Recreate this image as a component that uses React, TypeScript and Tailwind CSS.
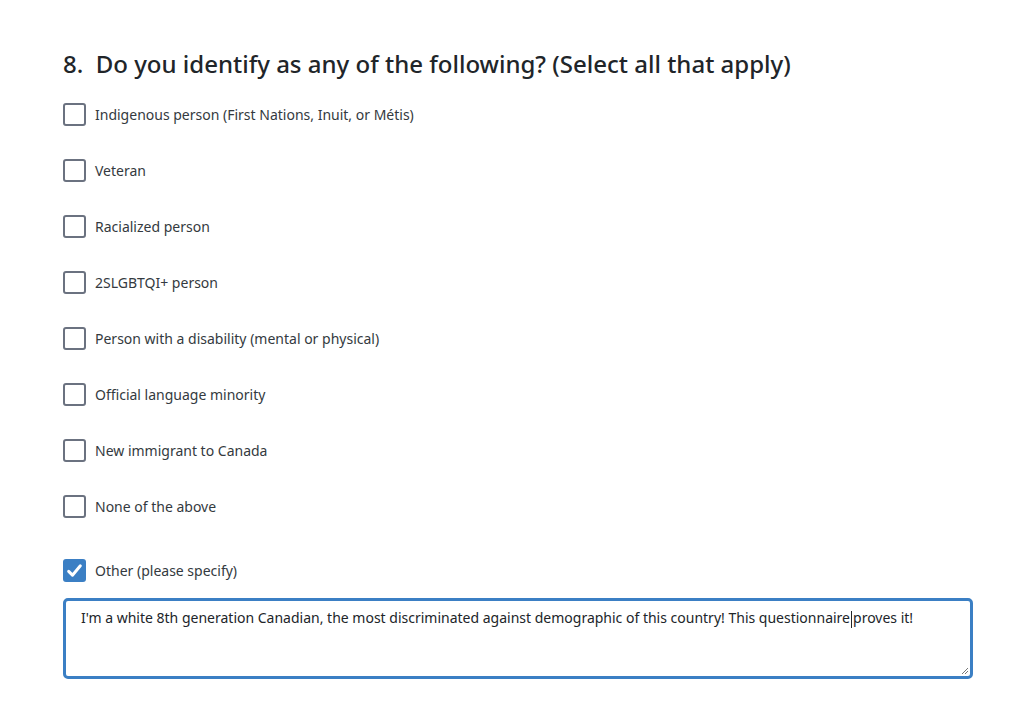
const options = [
  'Indigenous person (First Nations, Inuit, or Métis)',
  'Veteran',
  'Racialized person',
  '2SLGBTQI+ person',
  'Person with a disability (mental or physical)',
  'Official language minority',
  'New immigrant to Canada',
  'None of the above',
]

function Box({ checked }: { checked: boolean }) {
  return checked ? (
    <span className="w-[23px] h-[23px] rounded-[3px] bg-[#3b7fc4] flex items-center justify-center shrink-0">
      <svg width="17" height="17" viewBox="0 0 16 16" fill="none">
        <path d="M2.5 8.8l3.6 3.6 7.4-8.8" stroke="white" strokeWidth="2.8" strokeLinecap="round" strokeLinejoin="round" />
      </svg>
    </span>
  ) : (
    <span className="w-[23px] h-[23px] rounded-[3px] border-2 border-[#6b7280] bg-white shrink-0" />
  )
}

export default function App() {
  return (
    <div className="min-h-[723px] bg-white text-[#343a40] font-['Noto_Sans',sans-serif]">
      <div className="pl-[63px] pr-[51px] pt-[47px]">
        <h2 className="text-[24px] leading-[34px] font-medium text-[#212529] whitespace-pre">
          8.  Do you identify as any of the following? (Select all that apply)
        </h2>

        <div className="mt-[22px] flex flex-col gap-[33px]">
          {options.map(o => (
            <label key={o} className="flex items-center gap-[9px] h-[23px] text-[14px]">
              <Box checked={false} />
              <span>{o}</span>
            </label>
          ))}
        </div>

        <label className="mt-[41px] flex items-center gap-[9px] h-[23px] text-[14px]">
          <Box checked />
          <span>Other (please specify)</span>
        </label>

        <div className="mt-[16px] relative">
          <div className="h-[81px] w-[910px] rounded-[5px] border-[3px] border-[#3b7fc4] px-[15px] pt-[5px] text-[14px] leading-[24px] text-[#212529]">
            <span className="whitespace-nowrap">
              I'm a white 8th generation Canadian, the most discriminated against demographic of this country! This questionnaire
              <span className="inline-block w-px h-[17px] bg-[#212529] align-middle mx-px" />
              proves it!
            </span>
          </div>
          <svg className="absolute right-[4px] bottom-[4px]" width="8" height="8" viewBox="0 0 8 8">
            <path d="M1 7L7 1M4 7L7 4" stroke="#777" strokeWidth="1" />
          </svg>
        </div>
      </div>
    </div>
  )
}
